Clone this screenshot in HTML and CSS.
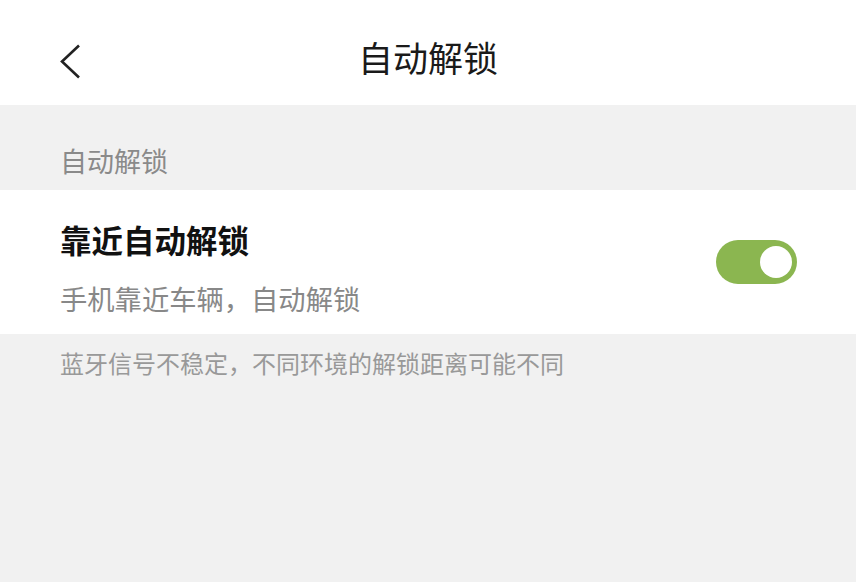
FILE: index.html
```html
<!DOCTYPE html>
<html lang="zh-CN">
<head>
    <meta charset="UTF-8">
    <meta name="viewport" content="width=device-width, initial-scale=1.0">
    <title>自动解锁</title>
    <link rel="stylesheet" href="styles.css">
</head>
<body>
    <div class="header">
        <svg class="back" width="26" height="36" viewBox="0 0 26 36">
            <polyline points="21,1.5 4,17.5 21,33.5" fill="none" stroke="#222" stroke-width="2.6"/>
        </svg>
        <h1>自动解锁</h1>
    </div>
    <div class="section-title">自动解锁</div>
    <div class="setting-row">
        <div class="setting-text">
            <div class="setting-name">靠近自动解锁</div>
            <div class="setting-desc">手机靠近车辆，自动解锁</div>
        </div>
        <div class="toggle on"><span class="knob"></span></div>
    </div>
    <p class="note">蓝牙信号不稳定，不同环境的解锁距离可能不同</p>
</body>
</html>
```

FILE: styles.css
```css
body {
    margin: 0;
    background-color: #f1f1f1;
    font-family: "Noto Sans CJK SC", "Noto Sans", sans-serif;
    min-height: 582px;
}
.header {
    position: relative;
    height: 105px;
    background-color: #ffffff;
    display: flex;
    align-items: center;
    justify-content: center;
}
.header h1 {
    margin: 7px 0 0;
    font-size: 35px;
    font-weight: 400;
    color: #1a1a1a;
    line-height: 1;
}
.back {
    position: absolute;
    left: 58px;
    top: 44px;
}
.section-title {
    height: 85px;
    box-sizing: border-box;
    padding: 42px 60px 0;
    font-size: 27px;
    line-height: 1;
    color: #8a8a8a;
}
.setting-row {
    height: 144px;
    background-color: #ffffff;
    display: flex;
    align-items: center;
    justify-content: space-between;
    padding: 0 59px 0 60px;
}
.setting-text {
    align-self: flex-start;
    padding-top: 34px;
}
.setting-name {
    font-size: 31.5px;
    font-weight: 700;
    color: #111;
    line-height: 1;
}
.setting-desc {
    font-size: 27.3px;
    color: #888;
    line-height: 1;
    margin-top: 29px;
}
.toggle {
    width: 81px;
    height: 44px;
    border-radius: 22px;
    background-color: #8bb650;
    position: relative;
}
.knob {
    position: absolute;
    top: 6px;
    right: 5px;
    width: 32px;
    height: 32px;
    border-radius: 50%;
    background-color: #ffffff;
}
.note {
    margin: 0;
    padding: 17px 60px 0;
    font-size: 24px;
    line-height: 1;
    color: #999;
}
```
